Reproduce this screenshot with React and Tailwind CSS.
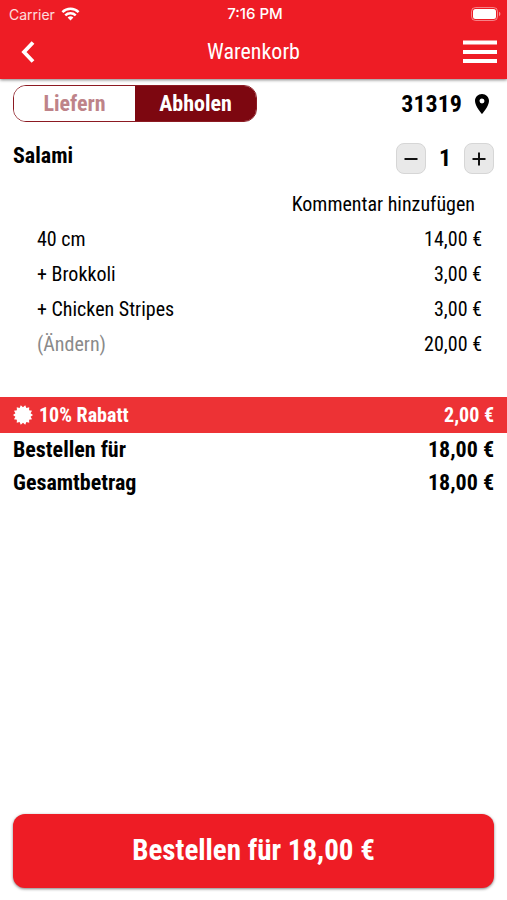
import React, { useState } from "react";
import { MdLocationOn } from "react-icons/md";

const items = [
  { label: "40 cm", price: "14,00 €" },
  { label: "+ Brokkoli", price: "3,00 €" },
  { label: "+ Chicken Stripes", price: "3,00 €" },
];

const totals = [
  { label: "Bestellen für", price: "18,00 €" },
  { label: "Gesamtbetrag", price: "18,00 €" },
];

// 14 teeth around the centre, alternating outer and inner radius
const badgePoints = Array.from({ length: 28 }, (_, i) => {
  const r = i % 2 === 0 ? 10 : 7.8;
  const a = (Math.PI * (i + 1)) / 14;
  return `${(10 + r * Math.sin(a)).toFixed(2)},${(10 - r * Math.cos(a)).toFixed(2)}`;
}).join(" ");

function StatusBar() {
  return (
    <div className="grid grid-cols-3 items-center h-7 pl-[9px] pr-[6px] font-['Inter',sans-serif] text-[14px]">
      <div className="flex items-center gap-[6px]">
        <span className="text-white/85">Carrier</span>
        <svg viewBox="0 0 18 14" className="w-[19px] h-[14px]" aria-hidden="true">
          <g fill="none" stroke="#fff" strokeWidth="2.5">
            <path d="M0.9 5.1a11.6 11.6 0 0 1 16.2 0" />
            <path d="M3.8 8.3a7.4 7.4 0 0 1 10.4 0" />
          </g>
          <path d="M9 13.6 6.1 10.6a4.1 4.1 0 0 1 5.8 0z" fill="#fff" />
        </svg>
      </div>
      <span className="text-center text-[15px] font-medium">7:16 PM</span>
      <svg viewBox="0 0 30 14" className="w-[30px] h-[14px] justify-self-end" aria-hidden="true">
        <rect x="0.5" y="0.5" width="26" height="13" rx="4" fill="none" stroke="#fff" strokeOpacity="0.45" />
        <rect x="2" y="2" width="23" height="10" rx="2.5" fill="#fff" />
        <path d="M28 4.8a2.4 2.4 0 0 1 0 4.4z" fill="#fff" fillOpacity="0.5" />
      </svg>
    </div>
  );
}

function Header() {
  return (
    <header className="bg-[#ee1c25] text-white shadow-[0_1px_3px_rgba(0,0,0,0.5)]">
      <StatusBar />
      <div className="grid grid-cols-[1fr_auto_1fr] items-center h-[51px] px-[10px] pb-1">
        <button aria-label="Zurück" className="w-9 h-8 flex items-center justify-center">
          <svg viewBox="0 0 14 22" className="w-[14px] h-[22px]">
            <path d="M12 1.5 3 11l9 9.5" fill="none" stroke="#fff" strokeWidth="3.8" />
          </svg>
        </button>
        <h1 className="text-[22px]">Warenkorb</h1>
        <button aria-label="Menü" className="justify-self-end">
          <svg viewBox="0 0 34 24" className="w-[34px] h-[24px]">
            <path d="M0 2.5h34M0 12h34M0 21h34" stroke="#fff" strokeWidth="4" />
          </svg>
        </button>
      </div>
    </header>
  );
}

function QuantityButton({ label, path, onClick }) {
  return (
    <button
      aria-label={label}
      onClick={onClick}
      className="w-[30px] h-[31px] flex items-center justify-center rounded-lg border border-[#d6d6d6] bg-[#e9e9e9]"
    >
      <svg viewBox="0 0 14 14" className="w-[14px] h-[14px]">
        <path d={path} stroke="#111" strokeWidth="2" />
      </svg>
    </button>
  );
}

export default function App() {
  const [mode, setMode] = useState("Abholen");
  const [count, setCount] = useState(1);

  return (
    <div className="min-h-screen flex flex-col bg-white text-black font-['Roboto_Condensed','Liberation_Sans_Narrow',Roboto,sans-serif]">
      <Header />
      <main className="flex-1 flex flex-col">
        <div className="flex items-center justify-between px-[13px] pt-[6px]">
          <div className="flex w-[244px] h-[37px] rounded-[13px] border border-[#8c1a22] overflow-hidden text-[22px] font-bold">
            {["Liefern", "Abholen"].map((name) => (
              <button
                key={name}
                onClick={() => setMode(name)}
                className={
                  mode === name
                    ? "flex-1 bg-[#7d0710] text-white"
                    : "flex-1 bg-white text-[#be8389]"
                }
              >
                {name}
              </button>
            ))}
          </div>
          <button className="flex items-center gap-2 text-[24px] font-bold">
            31319
            <MdLocationOn className="w-6 h-6" />
          </button>
        </div>

        <div className="flex items-start justify-between px-[13px] pt-[21px]">
          <h2 className="text-[22px] leading-[26px] font-bold">Salami</h2>
          <div className="flex items-center gap-3">
            <QuantityButton label="Weniger" path="M0.5 7h13" onClick={() => setCount(Math.max(0, count - 1))} />
            <span className="w-[14px] text-center text-[24px] leading-[31px] font-bold">{count}</span>
            <QuantityButton label="Mehr" path="M0.5 7h13M7 0.5v13" onClick={() => setCount(count + 1)} />
          </div>
        </div>

        <div className="flex justify-end pr-8 pt-3">
          <button className="h-[35px] text-[20px]">Kommentar hinzufügen</button>
        </div>

        <div className="pl-[37px] pr-[25px]">
          <table className="w-full text-[20px]">
            <tbody>
              {items.map((item) => (
                <tr key={item.label} className="h-[35px]">
                  <td>{item.label}</td>
                  <td className="text-right">{item.price}</td>
                </tr>
              ))}
              <tr className="h-[35px]">
                <td>
                  <button className="text-[#8a8a8a]">(Ändern)</button>
                </td>
                <td className="text-right">20,00 €</td>
              </tr>
            </tbody>
          </table>
        </div>

        <div className="flex items-center justify-between h-9 mt-9 px-[13px] bg-[#ed3235] text-white text-[20px] font-bold">
          <span className="flex items-center gap-[6px]">
            <svg viewBox="0 0 20 20" className="w-5 h-5" aria-hidden="true">
              <polygon points={badgePoints} fill="#fff" />
            </svg>
            10% Rabatt
          </span>
          <span>2,00 €</span>
        </div>

        <dl className="px-[13px] text-[22px] leading-[33px] font-bold">
          {totals.map((row) => (
            <div key={row.label} className="flex justify-between">
              <dt>{row.label}</dt>
              <dd>{row.price}</dd>
            </div>
          ))}
        </dl>

        <div className="mt-auto px-[13px] py-3">
          <button className="w-full h-[74px] rounded-xl bg-[#ee1c25] text-white text-[29px] font-bold shadow-[0_1px_3px_rgba(0,0,0,0.5)]">
            Bestellen für 18,00 €
          </button>
        </div>
      </main>
    </div>
  );
}
